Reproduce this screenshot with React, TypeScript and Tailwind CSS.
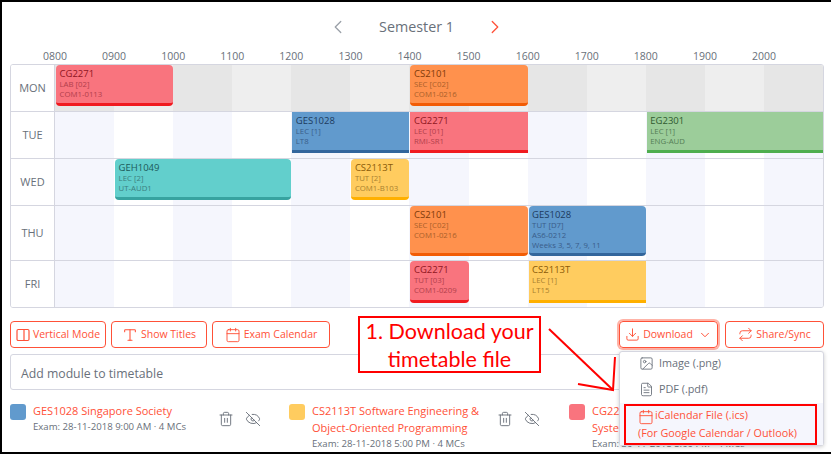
import { ChevronLeft, ChevronRight, ChevronDown, Type, Calendar, Download, Repeat, Image as ImageIcon, FileText, Trash2, EyeOff } from "lucide-react";

type Ev = { code: string; lines: string[]; col: string; color: string; round?: boolean };

const RED = "bg-[#f9747e] border-[#f01a1f] [--c:#8f1622] [--s:#b23f4c]";
const ORANGE = "bg-[#ff914d] border-[#f25c05] [--c:#7f3a0a] [--s:#ab5f2a]";
const BLUE = "bg-[#619acd] border-[#33669c] [--c:#1d3a5e] [--s:#3a5d8a]";
const GREEN = "bg-[#9ccd9a] border-[#4eae4e] [--c:#2f5a30] [--s:#557f56]";
const TEAL = "bg-[#62cfcc] border-[#37a3a0] [--c:#1c5a5a] [--s:#3c8080]";
const YELLOW = "bg-[#ffcc5f] border-[#ffb000] [--c:#8a5a08] [--s:#a9812f]";

const stripeCols = [
  "col-start-1", "col-start-2", "col-start-3", "col-start-4", "col-start-5", "col-start-6", "col-start-7",
  "col-start-8", "col-start-9", "col-start-10", "col-start-11", "col-start-12", "col-start-13",
];

const rows: { day: string; h: string; today?: boolean; last?: boolean; evH: string; events: Ev[] }[] = [
  {
    day: "MON", h: "h-[47px]", today: true, evH: "h-[41px]",
    events: [
      { code: "CG2271", lines: ["LAB [02]", "COM1-0113"], col: "col-[1/3]", color: RED, round: true },
      { code: "CS2101", lines: ["SEC [C02]", "COM1-0216"], col: "col-[7/9]", color: ORANGE, round: true },
    ],
  },
  {
    day: "TUE", h: "h-[47px]", evH: "h-[41px]",
    events: [
      { code: "GES1028", lines: ["LEC [1]", "LT8"], col: "col-[5/7]", color: BLUE },
      { code: "CG2271", lines: ["LEC [01]", "RMI-SR1"], col: "col-[7/9]", color: RED },
      { code: "EG2301", lines: ["LEC [1]", "ENG-AUD"], col: "col-[11/14]", color: GREEN },
    ],
  },
  {
    day: "WED", h: "h-[47px]", evH: "h-[41px]",
    events: [
      { code: "GEH1049", lines: ["LEC [2]", "UT-AUD1"], col: "col-[2/5]", color: TEAL, round: true },
      { code: "CS2113T", lines: ["TUT [2]", "COM1-B103"], col: "col-[6/7]", color: YELLOW, round: true },
    ],
  },
  {
    day: "THU", h: "h-[55px]", evH: "h-[50px]",
    events: [
      { code: "CS2101", lines: ["SEC [C02]", "COM1-0216"], col: "col-[7/9]", color: ORANGE, round: true },
      { code: "GES1028", lines: ["TUT [D7]", "AS6-0212", "Weeks 3, 5, 7, 9, 11"], col: "col-[9/11]", color: BLUE, round: true },
    ],
  },
  {
    day: "FRI", h: "h-[46px]", last: true, evH: "h-[42px]",
    events: [
      { code: "CG2271", lines: ["TUT [03]", "COM1-0209"], col: "col-[7/8]", color: RED, round: true },
      { code: "CS2113T", lines: ["LEC [1]", "LT15"], col: "col-[9/11]", color: YELLOW },
    ],
  },
];

const hours = ["0800", "0900", "1000", "1100", "1200", "1300", "1400", "1500", "1600", "1700", "1800", "1900", "2000"];

function Btn({ icon, label, w, focus, trail }: { icon: React.ReactNode; label: string; w: string; focus?: boolean; trail?: React.ReactNode }) {
  return (
    <div
      className={`${w} h-[27px] shrink-0 flex items-center justify-center gap-[3px] rounded-[4px] border border-[#ff5138] text-[#ff5138] text-[10.5px] ${
        focus ? "shadow-[0_0_0_2px_#ffb3a7]" : ""
      }`}
    >
      {icon}
      <span>{label}</span>
      {trail}
    </div>
  );
}

function Module({ color, title, exam, w, icons }: { color: string; title: string[]; exam: string; w: string; icons?: boolean }) {
  return (
    <div className={`${w} shrink-0 flex items-start`}>
      <div className={`${color} w-4 h-4 rounded-[3px] shrink-0`} />
      <div className="w-[186px] shrink-0 pl-[7px] -mt-[2px]">
        <div className="text-[11px] leading-[17px] text-[#ff5138] whitespace-nowrap">
          {title.map((t) => (
            <div key={t}>{t}</div>
          ))}
        </div>
        <div className="text-[9.6px] leading-[15px] text-[#69707a] whitespace-nowrap">{exam}</div>
      </div>
      {icons && (
        <div className="flex items-center gap-[11px] mt-[7px] text-[#69707a] pl-[6px]">
          <Trash2 size={16} strokeWidth={1.4} />
          <EyeOff size={16} strokeWidth={1.4} />
        </div>
      )}
    </div>
  );
}

export default function App() {
  return (
    <div
      className="relative w-[831px] h-[454px] overflow-hidden bg-white border-l-2 border-t-2 border-b-2 border-black text-[#69707a]"
      style={{ fontFamily: '"Open Sans", "Noto Sans", sans-serif' }}
    >
      <div className="mt-[5px] h-[40px] flex items-center justify-center">
        <div className="w-[179px] flex items-center justify-between">
          <ChevronLeft size={22} strokeWidth={1.4} className="text-[#9aa0a8]" />
          <span className="text-[14.3px]">Semester 1</span>
          <ChevronRight size={22} strokeWidth={1.4} className="text-[#ff5138]" />
        </div>
      </div>

      <div className="mt-[2px] h-[14px] pl-[23.5px] flex text-[10.5px] leading-[14px]">
        {hours.map((h) => (
          <div key={h} className="w-[59.08px] shrink-0 text-center">
            {h}
          </div>
        ))}
      </div>

      <div className="mt-px ml-2 w-[814px] border border-[#d5d6e0] rounded-[3px] overflow-hidden">
        {rows.map((r) => (
          <div key={r.day} className={`flex ${r.h} ${r.last ? "" : "border-b border-[#d5d6e0]"}`}>
            <div className="w-[44px] shrink-0 border-r border-[#d5d6e0] flex items-center justify-center text-[11px] bg-white">
              {r.day}
            </div>
            <div className="flex-1 grid grid-cols-[repeat(13,minmax(0,1fr))] grid-rows-1">
              {hours.map((h, i) => (
                <div
                  key={h}
                  className={`${stripeCols[i]} row-start-1 ${
                    r.today
                      ? i % 2 === 0 ? "bg-[#e6e6e6]" : "bg-[#eeeeee]"
                      : i % 2 === 0 ? "bg-[#f5f6fd]" : "bg-white"
                  }`}
                />
              ))}
              {r.events.map((e) => (
                <div
                  key={e.code + e.col}
                  className={`${e.col} ${e.color} ${r.evH} ${
                    e.round ? "rounded-[4px]" : ""
                  } row-start-1 self-start ml-px border-b-[3px] pl-[3.5px] pt-[4px] overflow-hidden whitespace-nowrap`}
                >
                  <div className="text-[9.5px] leading-[10px] text-[var(--c)]">{e.code}</div>
                  {e.lines.map((l) => (
                    <div key={l} className="text-[7.8px] leading-[10px] text-[var(--s)]">
                      {l}
                    </div>
                  ))}
                </div>
              ))}
            </div>
          </div>
        ))}
      </div>

      <div className="mt-[13px] pl-2 pr-[7px] flex justify-between">
        <div className="flex gap-[5px]">
          <Btn
            w="w-[96px]"
            label="Vertical Mode"
            icon={
              <svg width="14" height="14" viewBox="0 0 14 14" fill="none" stroke="currentColor" strokeWidth="1.2">
                <rect x="1" y="1.5" width="12" height="11" rx="1.2" />
                <line x1="8" y1="1.5" x2="8" y2="12.5" />
              </svg>
            }
          />
          <Btn w="w-[96px]" label="Show Titles" icon={<Type size={16} strokeWidth={1.6} />} />
          <Btn w="w-[118px]" label="Exam Calendar" icon={<Calendar size={16} strokeWidth={1.4} />} />
        </div>
        <div className="flex gap-[7px]">
          <Btn
            w="w-[99px]"
            focus
            label="Download"
            icon={<Download size={15} strokeWidth={1.5} />}
            trail={<ChevronDown size={14} strokeWidth={1.7} className="ml-[2px]" />}
          />
          <Btn w="w-[99px]" label="Share/Sync" icon={<Repeat size={15} strokeWidth={1.5} />} />
        </div>
      </div>

      <div className="mt-[6px] ml-2 w-[814px] h-[36px] border border-[#d5d6e0] rounded-[3px] flex items-center pl-[10px] pt-[5px] text-[12.25px]">
        Add module to timetable
      </div>

      <div className="mt-[14px] ml-2 flex">
        <Module
          w="w-[279px]"
          icons
          color="bg-[#619acd]"
          title={["GES1028 Singapore Society"]}
          exam="Exam: 28-11-2018 9:00 AM · 4 MCs"
        />
        <Module
          w="w-[280px]"
          icons
          color="bg-[#ffcc5f]"
          title={["CS2113T Software Engineering &", "Object-Oriented Programming"]}
          exam="Exam: 28-11-2018 5:00 PM · 4 MCs"
        />
        <Module
          w="w-[260px]"
          color="bg-[#f9747e]"
          title={["CG2271 Real-Time Embedded", "Systems"]}
          exam="Exam: 30-11-2018 5:00 PM · 4 MCs"
        />
      </div>

      {/* Download dropdown menu */}
      <div className="absolute left-[617px] top-[349px] w-[205px] h-[95px] bg-white border border-[#d5d6e0] rounded-[3px] shadow-[0_1px_4px_rgba(0,0,0,0.2)] text-[10.8px]">
        <div className="h-[23px] flex items-center gap-[5px] pl-[19px]">
          <ImageIcon size={15} strokeWidth={1.4} />
          <span>Image (.png)</span>
        </div>
        <div className="h-[28px] flex items-center gap-[5px] pl-[19px]">
          <FileText size={15} strokeWidth={1.4} />
          <span>PDF (.pdf)</span>
        </div>
        <div className="h-[42px] bg-[#f5f6fd] text-[#ff5138] pl-[18px]">
          <div className="h-[20px] flex items-end gap-[1px]">
            <Calendar size={16} strokeWidth={1.4} className="mb-[-2px]" />
            <span>iCalendar File (.ics)</span>
          </div>
          <div className="mt-[1px] leading-[18px]">(For Google Calendar / Outlook)</div>
        </div>
      </div>

      <div className="absolute left-[622px] top-[402px] w-[193px] h-[41px] border-2 border-[#ff0000]" />

      {/* Annotation */}
      <div
        className="absolute left-[356px] top-[314px] w-[183px] h-[57px] border-2 border-[#ff0000] bg-white text-[#ff0000] text-[21.5px] leading-[28px] text-center flex flex-col justify-center"
        style={{ fontFamily: 'Lato, "Open Sans", sans-serif' }}
      >
        <div>1. Download your</div>
        <div>timetable file</div>
      </div>
      <svg
        className="absolute -left-[2px] -top-[2px] pointer-events-none"
        width="831"
        height="454"
        viewBox="0 0 831 454"
        fill="none"
        stroke="#ff0000"
        strokeWidth="2"
      >
        <path d="M549 329 L613 390" />
        <path d="M578 384 L613 390 L615 357" />
      </svg>
    </div>
  );
}
